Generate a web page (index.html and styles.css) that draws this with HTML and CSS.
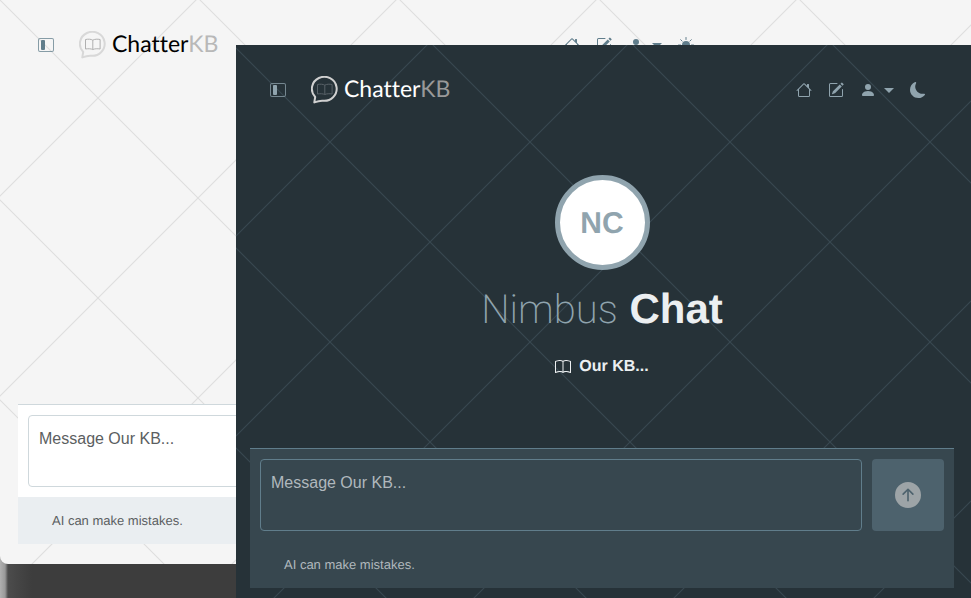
FILE: index.html
```html
<!DOCTYPE html>
<html lang="en">
<head>
<meta charset="utf-8">
<meta name="viewport" content="width=device-width, initial-scale=1">
<title>ChatterKB</title>
<link rel="stylesheet" href="styles.css">
</head>
<body>
<svg class="sprite" aria-hidden="true">
  <symbol id="sidebar" viewBox="0 0 16 16"><path opacity=".75" d="M14 2a1 1 0 0 1 1 1v10a1 1 0 0 1-1 1H2a1 1 0 0 1-1-1V3a1 1 0 0 1 1-1zM2 1a2 2 0 0 0-2 2v10a2 2 0 0 0 2 2h12a2 2 0 0 0 2-2V3a2 2 0 0 0-2-2z"/><path d="M3 4a1 1 0 0 1 1-1h2a1 1 0 0 1 1 1v8a1 1 0 0 1-1 1H4a1 1 0 0 1-1-1z"/></symbol>
  <symbol id="house" viewBox="0 0 16 16"><path d="M8.707 1.5a1 1 0 0 0-1.414 0L.646 8.146a.5.5 0 0 0 .708.708L2 8.207V13.5A1.5 1.5 0 0 0 3.5 15h9a1.5 1.5 0 0 0 1.5-1.5V8.207l.646.647a.5.5 0 0 0 .708-.708L13 5.793V2.5a.5.5 0 0 0-.5-.5h-1a.5.5 0 0 0-.5.5v1.293zM13 7.207V13.5a.5.5 0 0 1-.5.5h-9a.5.5 0 0 1-.5-.5V7.207l5-5z"/></symbol>
  <symbol id="pencil" viewBox="0 0 16 16"><path d="M15.502 1.94a.5.5 0 0 1 0 .706L14.459 3.69l-2-2L13.502.646a.5.5 0 0 1 .707 0l1.293 1.293zm-1.75 2.456-2-2L4.939 9.21a.5.5 0 0 0-.121.196l-.805 2.414a.25.25 0 0 0 .316.316l2.414-.805a.5.5 0 0 0 .196-.12l6.813-6.814z"/><path fill-rule="evenodd" d="M1 13.5A1.5 1.5 0 0 0 2.5 15h11a1.5 1.5 0 0 0 1.5-1.5v-6a.5.5 0 0 0-1 0v6a.5.5 0 0 1-.5.5h-11a.5.5 0 0 1-.5-.5v-11a.5.5 0 0 1 .5-.5H9a.5.5 0 0 0 0-1H2.5A1.5 1.5 0 0 0 1 2.5z"/></symbol>
  <symbol id="person" viewBox="0 0 16 16"><path d="M3 14s-1 0-1-1 1-4 6-4 6 3 6 4-1 1-1 1zm5-6a3 3 0 1 0 0-6 3 3 0 0 0 0 6"/></symbol>
  <symbol id="moon" viewBox="0 0 16 16"><path d="M6 .278a.77.77 0 0 1 .08.858 7.2 7.2 0 0 0-.878 3.46c0 4.021 3.278 7.277 7.318 7.277q.792-.001 1.533-.16a.79.79 0 0 1 .81.316.73.73 0 0 1-.031.893A8.35 8.35 0 0 1 8.344 16C3.734 16 0 12.286 0 7.71 0 4.266 2.114 1.312 5.124.06A.75.75 0 0 1 6 .278"/></symbol>
  <symbol id="sun" viewBox="0 0 16 16"><circle cx="8" cy="8" r="4"/><path stroke="currentColor" stroke-linecap="round" d="M8 .5v2M8 13.500v2M.5 8h2M13.500 8h2M2.700 2.700l1.400 1.400M11.900 11.900l1.400 1.400M13.300 2.700l-1.400 1.400M4.100 11.900l-1.400 1.400"/></symbol>
  <symbol id="book" viewBox="0 0 16 16"><path d="M1 2.828c.885-.37 2.154-.769 3.388-.893 1.33-.134 2.458.063 3.112.752v9.746c-.935-.53-2.12-.603-3.213-.493-1.18.12-2.37.461-3.287.811zm7.5-.141c.654-.689 1.782-.886 3.112-.752 1.234.124 2.503.523 3.388.893v9.923c-.918-.35-2.107-.692-3.287-.81-1.094-.111-2.278-.039-3.213.492zM8 1.783C7.015.936 5.587.81 4.287.94c-1.514.153-3.042.672-3.994 1.105A.5.5 0 0 0 0 2.5v11a.5.5 0 0 0 .707.455c.882-.4 2.303-.881 3.68-1.02 1.409-.142 2.59.087 3.223.877a.5.5 0 0 0 .78 0c.633-.79 1.814-1.019 3.222-.877 1.378.139 2.8.62 3.681 1.02A.5.5 0 0 0 16 13.5v-11a.5.5 0 0 0-.293-.455c-.952-.433-2.48-.952-3.994-1.105C10.413.809 8.985.936 8 1.783"/></symbol>
  <symbol id="arrow" viewBox="0 0 16 16"><path d="M16 8A8 8 0 1 0 0 8a8 8 0 0 0 16 0m-7.500 3.500a.5.5 0 0 1-1 0V5.707L5.354 7.854a.5.5 0 1 1-.708-.708l3-3a.5.5 0 0 1 .708 0l3 3a.5.5 0 0 1-.708.708L8.5 5.707z"/></symbol>
  <symbol id="bubble" viewBox="0 0 28 28"><path class="bubble-line" d="M3.300 26.400 4.200 21A12.400 12 0 1 1 11.500 24.700C8.500 24.600 6 25.400 3.300 26.400Z"/><path class="bubble-book" d="M13.800 9.200C12 8 9 8 6.500 8.500v9.500c2.500-.5 5.500-.3 7.300.5 1.800-.8 4.800-1 7.300-.5V8.500C18.600 8 15.600 8 13.800 9.200ZM13.800 9.200v9.200"/></symbol>
</svg>

<div class="desktop">
  <section class="window light" aria-label="Light theme">
    <div class="content">
      <header class="topbar">
        <button class="icon-button" type="button" aria-label="Toggle sidebar"><svg class="icon"><use href="#sidebar"/></svg></button>
        <a class="brand" href="#"><svg class="brand-mark" aria-hidden="true"><use href="#bubble"/></svg><span>Chatter<span class="brand-suffix">KB</span></span></a>
        <nav class="actions">
          <a class="icon-button" href="#" aria-label="Home"><svg class="icon"><use href="#house"/></svg></a>
          <a class="icon-button" href="#" aria-label="New chat"><svg class="icon"><use href="#pencil"/></svg></a>
          <button class="icon-button account" type="button" aria-label="Account"><svg class="icon"><use href="#person"/></svg><span class="caret"></span></button>
          <button class="icon-button" type="button" aria-label="Switch theme"><svg class="icon"><use href="#sun"/></svg></button>
        </nav>
      </header>
      <form class="composer">
        <div class="entry">
          <textarea class="message" aria-label="Message" placeholder="Message Our KB..."></textarea>
          <button class="send" type="button" aria-label="Send"><svg class="send-icon"><use href="#arrow"/></svg></button>
        </div>
        <p class="note">AI can make mistakes.</p>
      </form>
    </div>
  </section>

  <section class="window dark" aria-label="Dark theme">
    <div class="content">
      <header class="topbar">
        <button class="icon-button" type="button" aria-label="Toggle sidebar"><svg class="icon"><use href="#sidebar"/></svg></button>
        <a class="brand" href="#"><svg class="brand-mark" aria-hidden="true"><use href="#bubble"/></svg><span>Chatter<span class="brand-suffix">KB</span></span></a>
        <nav class="actions">
          <a class="icon-button" href="#" aria-label="Home"><svg class="icon"><use href="#house"/></svg></a>
          <a class="icon-button" href="#" aria-label="New chat"><svg class="icon"><use href="#pencil"/></svg></a>
          <button class="icon-button account" type="button" aria-label="Account"><svg class="icon"><use href="#person"/></svg><span class="caret"></span></button>
          <button class="icon-button" type="button" aria-label="Switch theme"><svg class="icon"><use href="#moon"/></svg></button>
        </nav>
      </header>
      <main class="welcome">
        <div class="avatar">NC</div>
        <h1 class="title"><span class="title-thin">Nimbus</span> Chat</h1>
        <p class="source"><svg class="icon" aria-hidden="true"><use href="#book"/></svg>Our KB...</p>
      </main>
      <form class="composer">
        <div class="entry">
          <textarea class="message" aria-label="Message" placeholder="Message Our KB..."></textarea>
          <button class="send" type="button" aria-label="Send"><svg class="send-icon"><use href="#arrow"/></svg></button>
        </div>
        <p class="note">AI can make mistakes.</p>
      </form>
    </div>
  </section>
</div>
</body>
</html>
```
FILE: styles.css
```css
* {
  box-sizing: border-box;
}

body {
  margin: 0;
  font-family: "Liberation Sans", Arial, sans-serif;
  font-size: 16px;
  line-height: 24px;
  text-rendering: geometricPrecision;
}

.sprite {
  position: absolute;
  width: 0;
  height: 0;
}

.desktop {
  position: relative;
  height: 100vh;
  overflow: hidden;
  background: linear-gradient(90deg, #b0b0b0 0, #999 5px, #4c4c4c 8px, #444 20px, #3d3d3d 32px);
}

/* Overlapping app windows */
.window {
  position: absolute;
  right: 0;
  display: flex;
  background-color: var(--page);
  background-image:
    linear-gradient(45deg, transparent calc(50% - 1px), var(--lattice) 50%, transparent calc(50% + 1px)),
    linear-gradient(-45deg, transparent calc(50% - 1px), var(--lattice) 50%, transparent calc(50% + 1px));
  background-size: 200px 200px;
}

.light {
  --page: #f5f5f5;
  --lattice: #dfdfdf;
  --icon: #607d8b;
  --brand: #000;
  --brand-suffix: #b8b8b8;
  --bubble: #d8d8d8;
  --bubble-book: #b0b0b0;
  --panel: #fff;
  --panel-line: #cfd8dc;
  --note-bg: #eaeef1;
  --text: #5b5e61;
  top: 0;
  bottom: 34px;
  left: 0;
  padding: 0 232px 20px 4px;
  background-position: -2px -2px;
  border-bottom-left-radius: 8px;
}

.dark {
  --page: #263238;
  --lattice: #37474f;
  --icon: #90a4ae;
  --brand: #fff;
  --brand-suffix: #999;
  --bubble: #d0d0d0;
  --bubble-book: #596268;
  --panel: #37474f;
  --panel-line: #607d8b;
  --note-bg: #37474f;
  --text: #b0b8bd;
  top: 45px;
  bottom: 0;
  left: 236px;
  padding-bottom: 10px;
  background-position: -6px -3px;
}

.content {
  flex: 1;
  display: flex;
  flex-direction: column;
  padding: 0 17px 0 14px;
}

.topbar {
  display: flex;
  align-items: center;
  height: 90px;
  padding: 0 28px 0 20px;
}

.icon-button {
  display: flex;
  padding: 0;
  border: 0;
  background: none;
  color: var(--icon);
}

.icon {
  width: 16px;
  height: 16px;
  fill: currentColor;
}

.brand {
  display: flex;
  gap: 5px;
  margin-left: 25px;
  color: var(--brand);
  font-family: Lato, sans-serif;
  font-size: 23px;
  font-variant-ligatures: none;
  line-height: 24px;
  text-decoration: none;
}

.brand-suffix {
  color: var(--brand-suffix);
}

.brand-mark {
  width: 28px;
  height: 28px;
  fill: none;
}

.bubble-line {
  stroke: var(--bubble);
  stroke-width: 2px;
  stroke-linejoin: round;
}

.bubble-book {
  stroke: var(--bubble-book);
  stroke-width: 1px;
}

.actions {
  display: flex;
  align-items: center;
  gap: 16px;
  margin-left: auto;
}

.account {
  align-items: center;
  gap: 8px;
}

.caret {
  border: 5px solid transparent;
  border-top-color: currentColor;
  border-bottom: 0;
}

.welcome {
  display: flex;
  flex-direction: column;
  align-items: center;
  padding-top: 40px;
}

.avatar {
  display: flex;
  align-items: center;
  justify-content: center;
  width: 95px;
  height: 95px;
  padding-top: 2px;
  border: 5px solid #90a4ae;
  border-radius: 50%;
  background: #fff;
  color: #90a4ae;
  font-size: 30px;
  font-weight: 700;
}

.title {
  margin: 14px 0;
  color: #eceff1;
  font-size: 42px;
  font-weight: 700;
  line-height: 50px;
}

.title-thin {
  color: #90a4ae;
  font-family: Roboto, sans-serif;
  font-size: 40px;
  font-weight: 200;
}

.source {
  display: flex;
  align-items: center;
  gap: 8px;
  margin: 6px 0 0;
  color: #eceff1;
  font-weight: 700;
}

.composer {
  margin-top: auto;
  border-top: 1px solid var(--panel-line);
  background: var(--panel);
}

.entry {
  display: flex;
  gap: 10px;
  padding: 10px;
}

.message {
  flex: 1;
  min-width: 0;
  height: 72px;
  padding: 11px 10px;
  border: 1px solid var(--panel-line);
  border-radius: 4px;
  background: var(--panel);
  color: var(--text);
  font: inherit;
  resize: none;
}

.message::placeholder {
  color: var(--text);
  opacity: 1;
}

.send {
  display: flex;
  align-items: center;
  justify-content: center;
  width: 72px;
  height: 72px;
  padding: 0;
  border: 0;
  border-radius: 4px;
  background: #4d626d;
  color: #9da4a7;
}

.send-icon {
  width: 26px;
  height: 26px;
  fill: currentColor;
}

.note {
  margin: 0;
  padding: 12px 34px 11px;
  background: var(--note-bg);
  color: var(--text);
  font-size: 13px;
}
```
